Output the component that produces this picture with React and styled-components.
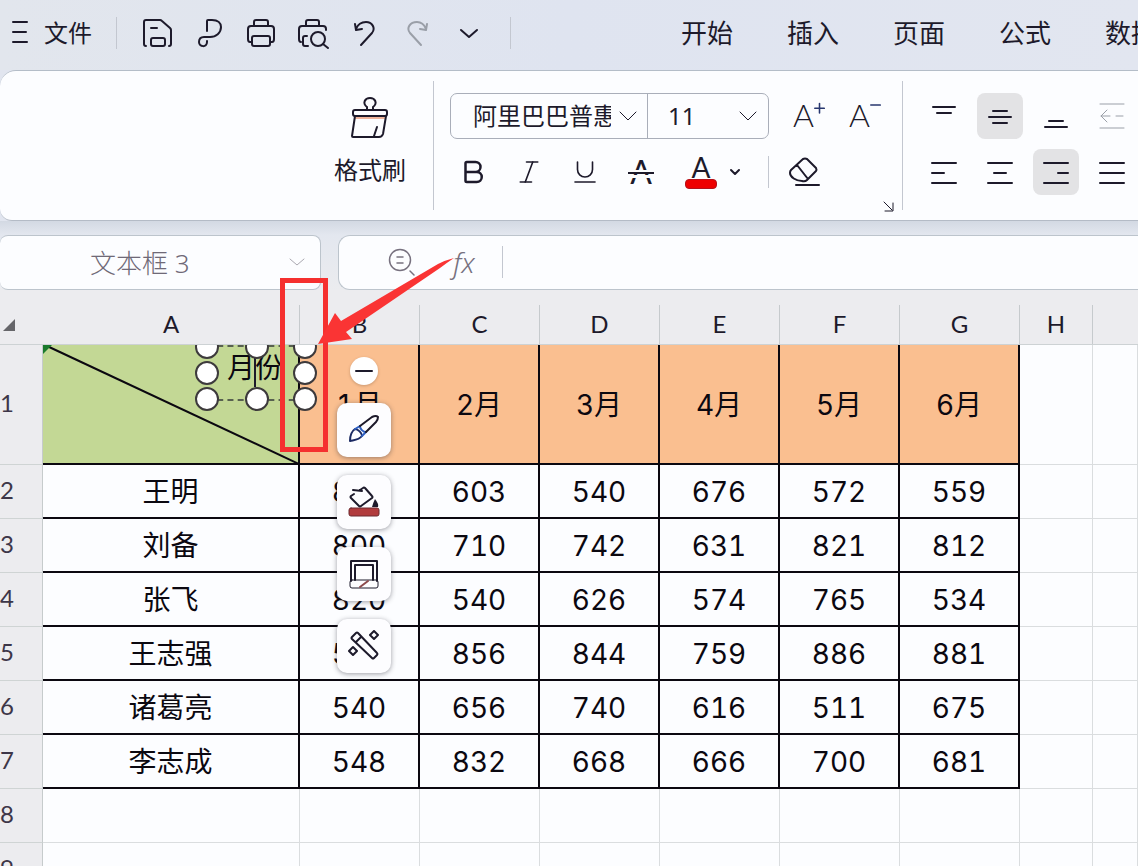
import React from 'react'
import styled, { createGlobalStyle } from 'styled-components'
import { Bold, Italic, Underline, ChevronDown } from 'lucide-react'

const GlobalStyle = createGlobalStyle`
  * {
    box-sizing: border-box;
  }

  body {
    margin: 0;
    color: #1d1a2b;
    font-family: 'Noto Sans', 'Noto Sans CJK SC', sans-serif;
    background: #fcfdff;
  }

  button,
  input,
  select {
    margin: 0;
    padding: 0;
    border: 0;
    background: none;
    color: inherit;
    font: inherit;
    outline: none;
  }
`

const Page = styled.div`
  position: relative;
  display: flex;
  flex-direction: column;
  height: 100vh;
  overflow: hidden;
  background: #e1e5ef;
`

const VerticalLine = styled.span`
  flex: none;
  width: 1px;
  height: ${(props) => props.$height}px;
  background: #c3c7d0;
`

/* top bar */

const TopBar = styled.header`
  display: flex;
  flex: none;
  align-items: center;
  height: 70px;
  padding: 0 0 4px 10px;
  overflow: hidden;
  background: linear-gradient(90deg, #e2e6ed, #dfe4f0 50%, #e2e6f0);
`

const FileButton = styled.button`
  display: flex;
  flex: none;
  align-items: center;
  gap: 14px;
  margin-right: 24px;
  font-size: 24px;
  line-height: 32px;
`

const QuickTools = styled.div`
  display: flex;
  flex: none;
  gap: 20px;
  margin: 0 25px 0 24px;
`

const IconButton = styled.button`
  display: flex;
  flex: none;
  align-items: center;
  justify-content: center;
  width: ${(props) => props.$size || 32}px;
  height: ${(props) => props.$size || 32}px;
  border-radius: 8px;
  background: ${(props) => (props.$active ? '#e3e3e5' : 'transparent')};
  color: ${(props) => (props.$muted ? '#9a9fa8' : 'inherit')};
`

const Tabs = styled.nav`
  display: flex;
  flex: none;
  gap: 54px;
  margin-left: 170px;
`

const Tab = styled.a`
  flex: none;
  color: inherit;
  font-size: 26px;
  line-height: 36px;
  text-decoration: none;
  white-space: nowrap;
`

/* ribbon */

const Ribbon = styled.section`
  display: flex;
  flex: none;
  height: 151px;
  padding: 10px 0 10px 334px;
  overflow: hidden;
  background: #fcfdff;
  border-top: 1px solid #b4bdc8;
  border-bottom: 1px solid #b4bbc6;
  border-radius: 16px 0 0 12px;
`

const PainterButton = styled.button`
  display: flex;
  flex: none;
  flex-direction: column;
  align-items: center;
  gap: 15px;
  width: 72px;
  padding-top: 16px;
  font-size: 24px;
  line-height: 32px;
  white-space: nowrap;
  align-self: flex-start;
`

const FontGroup = styled.div`
  display: flex;
  flex: none;
  flex-direction: column;
  gap: 10px;
  width: 469px;
  margin-left: 27px;
  padding: 12px 0 0 16px;
  border-left: 1px solid #c3c7d0;
`

const ToolRow = styled.div`
  display: flex;
  align-items: center;
  gap: ${(props) => props.$gap || 10}px;
  height: 46px;
`

const FontBox = styled.div`
  display: flex;
  flex: none;
  width: 319px;
  height: 46px;
  border: 1px solid #a9aeb9;
  border-radius: 7px;
`

const SelectWrap = styled.label`
  display: flex;
  flex: ${(props) => (props.$grow ? 1 : 'none')};
  align-items: center;
  justify-content: space-between;
  padding: 0 10px 0 ${(props) => (props.$grow ? 20 : 22)}px;
  border-left: ${(props) => (props.$grow ? '1px solid #a9aeb9' : '0')};
`

const PlainSelect = styled.select`
  width: ${(props) => props.$width}px;
  appearance: none;
  overflow: hidden;
  font-size: 24px;
  line-height: 32px;
`

const SizeLetter = styled.span`
  padding-top: 6px;
  font-family: Lato, sans-serif;
  font-size: 32px;
  font-weight: 300;
  line-height: 32px;
`

const SizeButton = styled(IconButton)`
  align-items: flex-start;
  justify-content: flex-start;
  height: 46px;
`

const StrikeLetter = styled.span`
  position: relative;
  width: 26px;
  font-family: Lato, sans-serif;
  font-size: 32px;
  font-weight: 400;
  line-height: 32px;

  &::after {
    content: '';
    position: absolute;
    top: 16px;
    left: 0;
    width: 26px;
    height: 2px;
    background: #1d1a2b;
    box-shadow: 0 3px 0 #fcfdff, 0 -2px 0 #fcfdff, 0 4px 0 #fcfdff;
  }
`

const ColorButton = styled.button`
  display: flex;
  flex: none;
  flex-direction: column;
  align-items: center;
  width: 32px;
  margin-left: 11px;
  font-family: Lato, sans-serif;
  font-size: 28px;
  line-height: 24px;
`

const ColorBar = styled.span`
  width: 32px;
  height: 10px;
  border: 1px solid #b3121a;
  border-radius: 4px;
  background: #ee0000;
`

const ToolDivider = styled(VerticalLine)`
  margin: 0 2px 0 15px;
`

const Launcher = styled.button`
  align-self: flex-end;
  height: 12px;
  margin: -5px 8px 0 0;
  line-height: 0;
`

const AlignGroup = styled.div`
  display: grid;
  grid-template-columns: repeat(4, 46px);
  grid-auto-rows: 46px;
  gap: 10px;
  padding: 12px 0 0 18px;
  border-left: 1px solid #c3c7d0;
`

/* name box and formula bar */

const FormulaRow = styled.div`
  display: flex;
  flex: none;
  gap: 17px;
  height: 69px;
  padding: 14px 0 0;
  background: linear-gradient(#d3d9e3, #e3e7ef 14px, #ebecef);
`

const NameBox = styled.div`
  display: flex;
  flex: none;
  align-items: center;
  width: 321px;
  height: 55px;
  padding: 0 14px 2px 90px;
  border: 1px solid #bcc4cc;
  border-left: 0;
  border-radius: 8px;
  background: #fcfdff;
  color: #6f6977;
`

const NameInput = styled.input`
  flex: 1;
  min-width: 0;
  font-size: 26px;
  font-weight: 300;
`

const FormulaBox = styled.div`
  display: flex;
  flex: 1;
  align-items: center;
  min-width: 0;
  height: 55px;
  padding: 0 0 2px 46px;
  border: 1px solid #bcc4cc;
  border-right: 0;
  border-radius: 12px 0 0 12px;
  background: #fcfdff;
  color: #77717f;
`

const FxButton = styled.button`
  width: 32px;
  margin: 0 22px 0 31px;
  font-family: 'Noto Sans', sans-serif;
  font-size: 28px;
  font-style: italic;
  font-weight: 300;
  line-height: 36px;
`

const FormulaInput = styled.input`
  flex: 1;
  min-width: 0;
  padding-left: 12px;
  font-size: 24px;
`

/* sheet */

const Sheet = styled.main`
  position: relative;
  flex: 1;
  min-height: 0;
  overflow: hidden;
  background: #fcfdff;
`

const Grid = styled.table`
  width: 100%;
  table-layout: fixed;
  border-collapse: separate;
  border-spacing: 0;
`

const Column = styled.col`
  width: ${(props) => (props.$width ? `${props.$width}px` : 'auto')};
`

const ColumnHead = styled.th`
  height: 55px;
  padding: 0;
  border-bottom: 1px solid #cdd2d4;
  background: #ececef;
  font-family: Lato, sans-serif;
  font-size: 24px;
  font-weight: 400;
  vertical-align: bottom;
`

const ColumnLabel = styled.div`
  height: 39px;
  border-right: 1px solid ${(props) => (props.$last ? 'transparent' : '#c6cacd')};
  line-height: 38px;
`

const CornerMark = styled.div`
  width: 0;
  margin: 0 0 13px 3px;
  border-bottom: 12px solid #66666a;
  border-left: 12px solid transparent;
`

const RowHead = styled.th`
  height: ${(props) => props.$height}px;
  padding: 0 0 4px;
  border-right: 1px solid #c6cbcc;
  border-bottom: 1px solid #cfd4d4;
  background: #ececef;
  color: #3d3648;
  font-family: Lato, sans-serif;
  font-size: 24px;
  font-weight: 400;
  text-align: left;
`

const Cell = styled.td`
  position: relative;
  padding: 2px 0 0;
  border-right: ${(props) => (props.$filled ? '2px solid #0b0810' : '1px solid #dadddf')};
  border-bottom: ${(props) => (props.$filled ? '2px solid #0b0810' : '1px solid #dadddf')};
  background: ${(props) => props.$color || '#fcfdff'};
  color: #0b0810;
  font-family: Inter, 'Noto Sans CJK SC', sans-serif;
  font-size: 28px;
  font-variant-numeric: tabular-nums;
  line-height: 36px;
  text-align: center;
`

const Diagonal = styled.svg`
  position: absolute;
  inset: 0;
  width: 100%;
  height: 100%;
`

/* everything floating above the cells */

const Overlay = styled.div`
  position: absolute;
  inset: 55px 0 0;
  overflow: hidden;
  pointer-events: none;
`

const TextBox = styled.div`
  position: absolute;
  top: 0;
  left: 207px;
  width: 98px;
  height: 56px;
  padding-left: 20px;
  border-top: 2px dashed #57604f;
  border-bottom: 2px dashed #57604f;
  color: #0b0810;
  font-size: 28px;
  line-height: 40px;
  white-space: nowrap;
`

const Caret = styled.span`
  position: absolute;
  top: 0;
  left: 47px;
  width: 2px;
  height: 40px;
  background: #1d1a2b;
`

const Handle = styled.span`
  position: absolute;
  top: ${(props) => props.$y}%;
  left: ${(props) => props.$x}%;
  width: 24px;
  height: 24px;
  border: 2px solid #3d3a3c;
  border-radius: 50%;
  background: #fff;
  transform: translate(-50%, -50%);
`

const FloatingTools = styled.div`
  position: absolute;
  top: 12px;
  left: 337px;
  display: flex;
  flex-direction: column;
  align-items: center;
  gap: 18px;
`

const CollapseButton = styled.button`
  display: flex;
  align-items: center;
  justify-content: center;
  width: 28px;
  height: 28px;
  border-radius: 50%;
  background: #fff;
  box-shadow: 0 1px 3px rgba(90, 60, 40, 0.3);
`

const FloatingButton = styled.button`
  display: flex;
  align-items: center;
  justify-content: center;
  width: 54px;
  height: 54px;
  border-radius: 10px;
  background: #fdfdff;
  box-shadow: 0 1px 5px rgba(40, 40, 50, 0.45);
`

const RedFrame = styled.div`
  position: absolute;
  top: 278px;
  left: 280px;
  width: 48px;
  height: 174px;
  border: 5px solid #f5302f;
  pointer-events: none;
`

const RedArrow = styled.svg`
  position: absolute;
  top: 250px;
  left: 310px;
  pointer-events: none;
`

const Icon = ({ w = 32, h = 32, stroke = 2, children }) => (
  <svg
    width={w}
    height={h}
    viewBox={`0 0 ${w} ${h}`}
    fill="none"
    stroke="currentColor"
    strokeWidth={stroke}
    strokeLinecap="round"
    strokeLinejoin="round"
    aria-hidden="true"
  >
    {children}
  </svg>
)

const quickTools = [
  {
    label: '保存',
    icon: (
      <>
        <path d="M5 29Q3 29 3 27V5Q3 3 5 3H19Q20 3 21 4L29 11Q30 12 30 13V27Q30 29 28 29" />
        <path d="M12 21H22Q24 21 24 23V27Q24 29 22 29H12Q10 29 10 27V23Q10 21 12 21ZM10 11H16" />
      </>
    ),
  },
  {
    label: '输出为PDF',
    icon: <path d="M14 14V4Q14 3 15 3H19C25 3 28 6 28 10C28 16 23 20 17 20H11C8 20 6 22 6 25C6 30 14 31 14 25V24" />,
  },
  {
    label: '打印',
    icon: (
      <>
        <path d="M9 9V5Q9 3 11 3H21Q23 3 23 5V9" />
        <path d="M6 25H5Q3 25 3 22V12Q3 9 6 9H26Q29 9 29 12V22Q29 25 27 25H26" />
        <path d="M9 19H23Q25 19 25 21V27Q25 29 23 29H9Q7 29 7 27V21Q7 19 9 19Z" />
      </>
    ),
  },
  {
    label: '打印预览',
    icon: (
      <>
        <path d="M9 9V5Q9 3 11 3H20Q22 3 22 5V9" />
        <path d="M4 25Q2 25 2 22V12Q2 9 5 9H26Q29 9 29 12V13" />
        <path d="M10 19H8Q6 19 6 21V27Q6 29 8 29H11" />
        <circle cx="21" cy="22" r="7" />
        <path d="M26 27L31 31" />
      </>
    ),
  },
  { label: '撤销', icon: <path d="M6 7L7 13L13 12M7 12C9 7 12 5 17 5C23 5 27 11 23 16L12 28" /> },
  { label: '恢复', muted: true, icon: <path d="M26 7L25 13L19 12M25 12C23 7 20 5 16 5C9 5 5 11 9 16L20 28" /> },
  { label: '更多', icon: <path d="M8 13L16 20L24 13" /> },
]

const tabs = ['开始', '插入', '页面', '公式', '数据']

const alignTools = [
  { label: '顶端对齐', d: 'M5 7H27M9 13H23' },
  { label: '垂直居中', active: true, d: 'M9 11H23M5 17H27M9 23H23' },
  { label: '底端对齐', d: 'M9 21H23M5 27H27' },
  { label: '减少缩进', muted: true, d: 'M4 4H28M4 28H28M11 10L5 16L11 22M5 16H14M20 16H27' },
  { label: '左对齐', d: 'M4 7H28M4 17H16M4 27H28' },
  { label: '水平居中', d: 'M4 7H28M10 17H22M4 27H28' },
  { label: '右对齐', active: true, d: 'M4 7H28M18 17H28M4 27H28' },
  { label: '两端对齐', d: 'M4 7H28M4 17H28M4 27H28' },
]

const columns = ['A', 'B', 'C', 'D', 'E', 'F', 'G', 'H', '']
const widths = [43, 257, 120, 120, 120, 120, 120, 120, 73, 0]
const months = ['1月', '2月', '3月', '4月', '5月', '6月']

const rows = [
  ['王明', 866, 603, 540, 676, 572, 559],
  ['刘备', 800, 710, 742, 631, 821, 812],
  ['张飞', 820, 540, 626, 574, 765, 534],
  ['王志强', 574, 856, 844, 759, 886, 881],
  ['诸葛亮', 540, 656, 740, 616, 511, 675],
  ['李志成', 548, 832, 668, 666, 700, 681],
]

const emptyRows = [8, 9]

const handles = [
  [0, 0], [51, 0], [100, 0],
  [0, 50], [100, 50],
  [0, 100], [51, 100], [100, 100],
]

const floatingTools = [
  {
    label: '样式',
    icon: (
      <>
        <path stroke="#1b2a63" d="M2 27C2 22 4 17 7 15C10 15 14 19 14 22C11 26 6 26 2 27Z" />
        <path stroke="#2f5fc0" d="M7 15L12 12C12 15 15 18 18 18L14 22" />
        <path d="M12 12L24 3Q28 1 30 3Q30 6 28 8L18 18" />
      </>
    ),
  },
  {
    label: '填充',
    icon: (
      <>
        <rect x="1" y="22" width="30" height="8" rx="2" fill="#b13b3d" stroke="#6d2b30" strokeWidth="1" />
        <path d="M5 4L14 5M6 8L3 10Q2 11 3 12L11 20Q12 21 13 20L24 12Q25 11 24 10L17 2Q16 1 15 2L12 4" />
        <path fill="currentColor" stroke="none" d="M27 13Q31 18 30 21H24Q25 17 27 13Z" />
      </>
    ),
  },
  {
    label: '轮廓',
    icon: (
      <>
        <path d="M3 23V3H29V23M7 22V7H25V22" />
        <rect x="2" y="22" width="28" height="8" rx="2" strokeWidth="1" />
        <path stroke="#8c4a4c" d="M12 29L20 23" />
      </>
    ),
  },
  {
    label: '智能美化',
    icon: (
      <>
        <path d="M4 7L8 3Q9 2 10 3L29 23Q30 24 29 25L26 28Q25 29 24 28L4 9Q3 8 4 7ZM8 12L13 7" />
        <path d="M26 1L30 5L26 9L22 5ZM5 17L9 21L5 25L1 21Z" />
      </>
    ),
  },
]

const TopArea = () => (
  <TopBar>
    <FileButton type="button">
      <Icon w={20} h={26}><path d="M3 2H17M3 12H16M3 22H17" /></Icon>
      文件
    </FileButton>
    <VerticalLine $height={32} />
    <QuickTools>
      {quickTools.map((tool) => (
        <IconButton key={tool.label} type="button" aria-label={tool.label} $muted={tool.muted}>
          <Icon>{tool.icon}</Icon>
        </IconButton>
      ))}
    </QuickTools>
    <VerticalLine $height={32} />
    <Tabs>
      {tabs.map((tab) => (
        <Tab key={tab} href="#">{tab}</Tab>
      ))}
    </Tabs>
  </TopBar>
)

const RibbonArea = () => (
  <Ribbon>
    <PainterButton type="button">
      <Icon w={40} h={42}>
        <path stroke="#f0b49c" d="M6 21H34" />
        <path d="M17 13V10C12 6 15 1 20 1C25 1 28 6 23 10V13" />
        <path d="M5 13H35Q37 13 37 15V17Q37 19 35 19H5Q3 19 3 17V15Q3 13 5 13Z" />
        <path d="M5 19L2 39Q2 40 3 40H29Q32 40 33 37L36 19M27 30L24 39" />
      </Icon>
      格式刷
    </PainterButton>

    <FontGroup>
      <ToolRow $gap={24}>
        <FontBox>
          <SelectWrap>
            <PlainSelect aria-label="字体" $width={138} defaultValue="a">
              <option value="a">阿里巴巴普惠体</option>
            </PlainSelect>
            <Icon w={26} h={20} stroke={1}><path d="M9 6L17 14L25 6" /></Icon>
          </SelectWrap>
          <SelectWrap $grow>
            <PlainSelect aria-label="字号" $width={60} defaultValue="11">
              <option>11</option>
            </PlainSelect>
            <Icon w={20} h={20} stroke={1}><path d="M2 6L10 14L18 6" /></Icon>
          </SelectWrap>
        </FontBox>
        <SizeButton type="button" aria-label="增大字号">
          <SizeLetter>A</SizeLetter>
          <Icon w={14} h={32}><path stroke="#27376f" d="M7 9V21M1 15H13" /></Icon>
        </SizeButton>
        <SizeButton type="button" aria-label="减小字号">
          <SizeLetter>A</SizeLetter>
          <Icon w={14} h={32}><path stroke="#27376f" d="M1 11H13" /></Icon>
        </SizeButton>
      </ToolRow>
      <ToolRow>
        <IconButton type="button" $size={46} aria-label="加粗"><Bold size={30} strokeWidth={2} /></IconButton>
        <IconButton type="button" $size={46} aria-label="倾斜"><Italic size={30} strokeWidth={1.3} /></IconButton>
        <IconButton type="button" $size={46} aria-label="下划线"><Underline size={30} strokeWidth={1.3} /></IconButton>
        <IconButton type="button" $size={46} aria-label="删除线"><StrikeLetter>A</StrikeLetter></IconButton>
        <ColorButton type="button">
          A
          <ColorBar />
        </ColorButton>
        <ChevronDown size={16} strokeWidth={3} />
        <ToolDivider $height={32} />
        <IconButton type="button" $size={46} aria-label="清除">
          <Icon>
            <path d="M15 3Q17 2 19 3L28 12Q29 14 28 15L19 24Q17 26 14 25C8 25 2 21 2 17Q2 15 3 14ZM9 9L20 23M8 29H31" />
          </Icon>
        </IconButton>
      </ToolRow>
      <Launcher type="button" aria-label="字体设置">
        <Icon w={12} h={12}><path d="M2 2L10 10M3 11H11V3" strokeWidth="1" /></Icon>
      </Launcher>
    </FontGroup>

    <AlignGroup>
      {alignTools.map((tool) => (
        <IconButton
          key={tool.label}
          type="button"
          aria-label={tool.label}
          $size={46}
          $active={tool.active}
          $muted={tool.muted}
        >
          <Icon stroke={tool.muted ? 1 : 2}><path d={tool.d} /></Icon>
        </IconButton>
      ))}
    </AlignGroup>
  </Ribbon>
)

const FormulaArea = () => (
  <FormulaRow>
    <NameBox>
      <NameInput aria-label="名称框" defaultValue="文本框 3" />
      <Icon w={18} h={18} stroke={1}><path stroke="#aaa8b0" d="M2 6L9 12L16 6" /></Icon>
    </NameBox>
    <FormulaBox>
      <IconButton type="button" aria-label="查找">
        <Icon stroke={1.5}>
          <circle cx="15" cy="14" r="10.5" />
          <path d="M12 11H18M12 17H18M25 25L29 29" />
        </Icon>
      </IconButton>
      <FxButton type="button">fx</FxButton>
      <VerticalLine $height={32} />
      <FormulaInput aria-label="编辑栏" />
    </FormulaBox>
  </FormulaRow>
)

const SheetArea = () => (
  <Sheet>
    <Grid>
      <colgroup>
        {widths.map((width, i) => (
          <Column key={i} $width={width} />
        ))}
      </colgroup>
      <thead>
        <tr>
          <ColumnHead><CornerMark /></ColumnHead>
          {columns.map((name) => (
            <ColumnHead key={name} scope="col">
              <ColumnLabel $last={!name}>{name}</ColumnLabel>
            </ColumnHead>
          ))}
        </tr>
      </thead>
      <tbody>
        <tr>
          <RowHead scope="row" $height={120}>1</RowHead>
          <Cell $filled $color="#c3d895">
            <Diagonal viewBox="0 0 255 118" preserveAspectRatio="none">
              <path d="M4 1L256 119" stroke="#0b0810" strokeWidth="2" />
              <path d="M0 0H9L0 9Z" fill="#1a7a2c" />
            </Diagonal>
          </Cell>
          {months.map((month) => (
            <Cell key={month} $filled $color="#fabf90">{month}</Cell>
          ))}
          <Cell />
          <Cell />
        </tr>
        {rows.map((row, i) => (
          <tr key={row[0]}>
            <RowHead scope="row" $height={54}>{i + 2}</RowHead>
            {row.map((value, j) => (
              <Cell key={j} $filled>{value}</Cell>
            ))}
            <Cell />
            <Cell />
          </tr>
        ))}
        {emptyRows.map((number) => (
          <tr key={number}>
            <RowHead scope="row" $height={54}>{number}</RowHead>
            {columns.map((name) => (
              <Cell key={name} />
            ))}
          </tr>
        ))}
      </tbody>
    </Grid>

    <Overlay>
      <TextBox>
        月份
        <Caret />
        {handles.map(([x, y]) => (
          <Handle key={`${x}-${y}`} $x={x} $y={y} />
        ))}
      </TextBox>
      <FloatingTools>
        <CollapseButton type="button" aria-label="收起">
          <Icon w={20} h={4}><path d="M2 2H18" /></Icon>
        </CollapseButton>
        {floatingTools.map((tool) => (
          <FloatingButton key={tool.label} type="button" aria-label={tool.label}>
            <Icon>{tool.icon}</Icon>
          </FloatingButton>
        ))}
      </FloatingTools>
    </Overlay>
  </Sheet>
)

const App = () => {
  return (
    <>
      <GlobalStyle />
      <Page>
        <TopArea />
        <RibbonArea />
        <FormulaArea />
        <SheetArea />
        <RedFrame />
        <RedArrow width="160" height="100" viewBox="0 0 160 100" aria-hidden="true">
          <path d="M8 94L25 63L31 71L128 14Q136 10 144 8Q138 12 130 18L36 82L42 89Z" fill="#fa3434" />
        </RedArrow>
      </Page>
    </>
  )
}

export default App
